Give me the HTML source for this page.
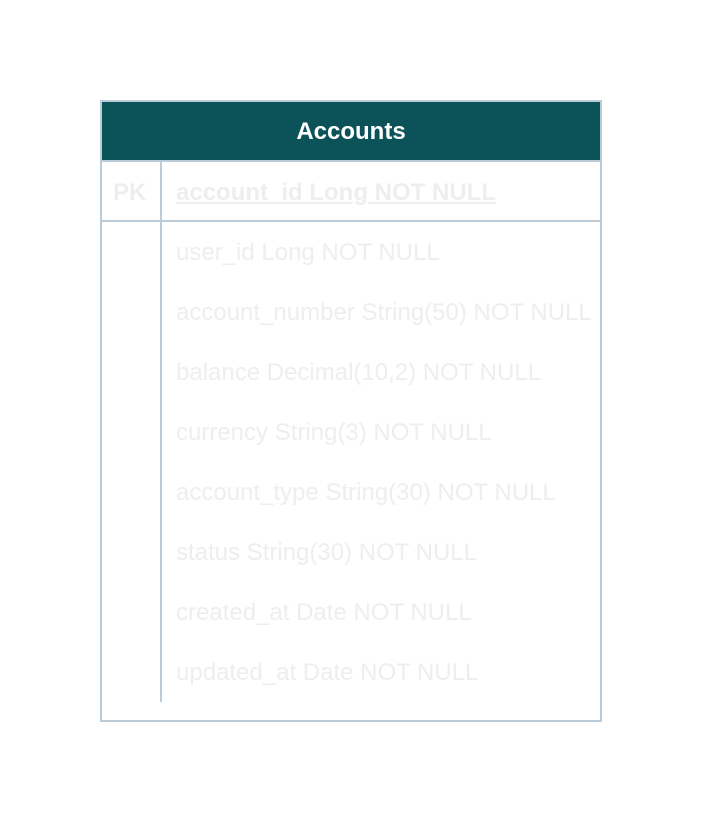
<!DOCTYPE html>
<html><head><style>
body{margin:0;width:702px;height:822px;background:#fff;position:relative;font-family:"Liberation Sans",Arial,sans-serif;}
.box{position:absolute;left:100px;top:100px;width:498px;height:618px;border:2px solid #bccbd8;}
.hdr{position:absolute;left:0;top:0;width:498px;height:58px;background:#0b5359;color:#fff;font-weight:bold;font-size:24px;text-align:center;line-height:60px;}
.hl{position:absolute;left:0;top:58px;width:498px;height:2px;background:#bccbd8;}
.hl2{position:absolute;left:0;top:118px;width:498px;height:2px;background:#bccbd8;}
.vl{position:absolute;left:58px;top:60px;width:2px;height:540px;background:#bccbd8;}
.t{position:absolute;color:#eeeeee;font-size:24px;line-height:28px;white-space:nowrap;}
.b{font-weight:bold;}
</style></head><body>
<div class="box">
<div class="hdr">Accounts</div>
<div class="hl"></div><div class="hl2"></div><div class="vl"></div>
<div class="t b" style="left:11px;top:77px">PK</div>
<div class="t b" style="left:74px;top:77px;text-decoration:underline">account_id Long NOT NULL</div>
<div class="t" style="left:74px;top:137px">user_id Long NOT NULL</div>
<div class="t" style="left:74px;top:197px">account_number String(50) NOT NULL</div>
<div class="t" style="left:74px;top:257px">balance Decimal(10,2) NOT NULL</div>
<div class="t" style="left:74px;top:317px">currency String(3) NOT NULL</div>
<div class="t" style="left:74px;top:377px">account_type String(30) NOT NULL</div>
<div class="t" style="left:74px;top:437px">status String(30) NOT NULL</div>
<div class="t" style="left:74px;top:497px">created_at Date NOT NULL</div>
<div class="t" style="left:74px;top:557px">updated_at Date NOT NULL</div>
</div>
</body></html>
